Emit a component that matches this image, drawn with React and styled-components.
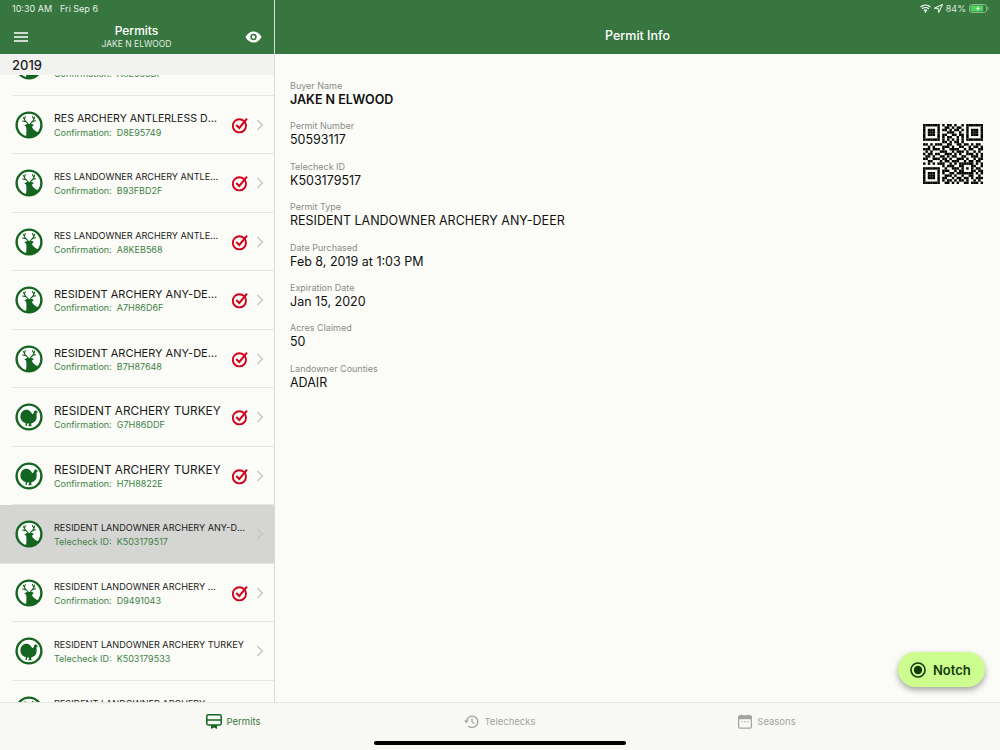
import React from 'react';
import styled, { createGlobalStyle } from 'styled-components';

const GREEN = '#38763f';
const DARK = '#14651f';

const Global = createGlobalStyle`
  html, body { margin: 0; padding: 0; height: 100%; background: #fbfcf7; }
  body { font-family: Inter, "Liberation Sans", sans-serif; }
  * { box-sizing: border-box; }
`;

const Screen = styled.div`
  position: relative;
  width: 1000px;
  height: 750px;
  overflow: hidden;
  display: flex;
  flex-direction: column;
  background: #fbfcf7;
`;

const Main = styled.div`
  flex: 1;
  min-height: 0;
  display: flex;
`;

const Sidebar = styled.aside`
  width: 275px;
  flex: none;
  display: flex;
  flex-direction: column;
  border-right: 1px solid #dcdcd8;
`;

const Detail = styled.section`
  flex: 1;
  display: flex;
  flex-direction: column;
`;

const Header = styled.header`
  height: 54px;
  flex: none;
  background: ${GREEN};
  color: #fff;
  position: relative;
  display: flex;
  align-items: flex-end;
`;

const StatusLeft = styled.div`
  position: absolute;
  left: 12px;
  top: 3px;
  font-size: 9px;
  line-height: 12px;
  color: #e6efe6;
  display: flex;
  gap: 8px;
`;

const StatusRight = styled.div`
  position: absolute;
  right: 11px;
  top: 3px;
  font-size: 9px;
  line-height 12px;
  color: #dfeadf;
  display: flex;
  align-items: center;
  gap: 3px;
`;

const SideBarHead = styled.div`
  width: 100%;
  height: 34px;
  padding: 0 12px 0 14px;
  display: flex;
  align-items: center;
  justify-content: space-between;
`;

const HeadTitles = styled.div`
  text-align: center;
  line-height: 1;
`;

const HeadTitle = styled.div`
  font-size: 12px;
  font-weight: 500;
  line-height: 14px;
`;

const HeadSub = styled.div`
  font-size: 8.5px;
  line-height: 12px;
  color: #e3ece3;
`;

const DetailTitle = styled.div`
  width: 100%;
  height: 36px;
  text-align: center;
  font-size: 12.5px;
  font-weight: 500;
  line-height: 36px;
`;

const ListArea = styled.div`
  position: relative;
  flex: 1;
  min-height: 0;
  overflow: hidden;
`;

const YearBar = styled.div`
  position: absolute;
  z-index: 1;
  top: 0;
  left: 0;
  right: 0;
  height: 21px;
  padding-left: 12px;
  background: #f2f2f0;
  font-size: 13px;
  font-weight: 500;
  line-height: 22px;
  color: #1c1c1c;
`;

const Rows = styled.div`
  margin-top: -17px;
`;

const Row = styled.div`
  height: 58.5px;
  display: flex;
  align-items: center;
  padding: 0 10px 0 15px;
  position: relative;
  background: ${p => (p.$selected ? '#d5d5d3' : 'transparent')};
  &::after {
    content: '';
    position: absolute;
    left: ${p => (p.$selected ? '0' : '12px')};
    right: 0;
    bottom: 0;
    height: 1px;
    background: #e6e6e2;
  }
`;

const RowText = styled.div`
  flex: 1;
  min-width: 0;
  margin-left: 11px;
  padding-top: 1px;
`;

const RowTitle = styled.div`
  font-size: ${p => p.$size}px;
  line-height: 14px;
  color: #1a1a1a;
  white-space: nowrap;
  overflow: hidden;
  text-overflow: ellipsis;
  max-width: ${p => (p.$wide ? '196px' : '167px')};
`;

const RowSub = styled.div`
  font-size: 9px;
  line-height: 12px;
  margin-top: 1px;
  color: #3d8147;
  white-space: pre;
`;

const Field = styled.div`
  margin-bottom: 13.4px;
`;

const FieldLabel = styled.div`
  font-size: 9px;
  line-height: 12px;
  color: #8b8b88;
`;

const FieldValue = styled.div`
  font-size: 12.5px;
  line-height: 15px;
  color: #111;
  font-weight: ${p => (p.$bold ? 600 : 400)};
`;

const DetailBody = styled.div`
  flex: 1;
  padding: 26px 17px 0 15px;
  display: flex;
  justify-content: space-between;
  align-items: flex-start;
`;

const QrBox = styled.div`
  margin-top: 44px;
  line-height: 0;
`;

const TabBar = styled.nav`
  height: 48px;
  flex: none;
  border-top: 1px solid #e6e7e1;
  background: #f8f9f4;
  display: grid;
  grid-template-columns: repeat(3, 267px);
  justify-content: center;
`;

const Tab = styled.div`
  height: 36px;
  display: flex;
  align-items: center;
  justify-content: center;
  gap: 5px;
  font-size: 9.5px;
  color: ${p => (p.$active ? '#38763f' : '#a3a3a1')};
`;

const HomeBar = styled.div`
  position: absolute;
  left: 374px;
  bottom: 5px;
  width: 252px;
  height: 4px;
  border-radius: 2px;
  background: #000;
`;

const Fab = styled.div`
  position: absolute;
  left: 898px;
  top: 652px;
  width: 87px;
  height: 35px;
  border-radius: 18px;
  background: #cdfd8f;
  box-shadow: 0 3px 6px rgba(0, 0, 0, 0.35);
  display: flex;
  align-items: center;
  padding-left: 12px;
  gap: 7px;
  font-size: 13px;
  font-weight: 600;
  color: #123b0d;
`;

function Seal({ kind }) {
  return (
    <svg width="28" height="28" viewBox="0 0 28 28" style={{ flex: 'none' }}>
      <circle cx="14" cy="14" r="12.4" fill="#fff" stroke={DARK} strokeWidth="2.4" />
      {kind === 'deer' ? (
        <g fill={DARK}>
          <path d="M11 26 C11.5 21 11.7 18 11 15.5 L9.2 14.6 L11 13.4 C11.8 12.7 12.6 12.7 13.2 12.9 L15.2 12.7 C16.5 12.6 17.5 13 18.2 13.6 L18.5 15 L16.8 15.4 C17.5 18 19.5 19.5 23.5 21.5 C22 24.5 18.5 26.5 14 26.5 Z" />
          <path d="M13 12.6 C11.5 11.4 9.5 10 8.4 6.4 M10.6 10.8 L7.6 10 M9.4 8.6 L10.2 5.6 M15.6 12.4 C17.4 11.2 19.2 9.4 19.6 6 M17.6 10.4 L20.6 9.8 M18.8 8.2 L17.4 5.4" fill="none" stroke={DARK} strokeWidth="1.1" strokeLinecap="round" />
        </g>
      ) : (
        <g fill={DARK}>
          <path d="M5.4 13.2 C5.6 8.8 9 6 12.4 6.8 C15 7.4 16.2 9.4 17.2 11 C18 11.4 18.8 10.4 19 9 C19.2 7.6 20.6 7 21.6 7.8 L23 9.4 L21.6 9.8 C21.4 11.6 21.8 13.2 21.6 15 C21.2 18.2 18.6 20 16.2 20.4 L16.2 22.4 L18 23.2 L13.2 23.2 L14.4 20.6 C13.6 20.6 13.2 20.6 12.4 20.4 L11.6 23 L10.4 23 L10.8 20 C7.6 19.2 5.2 16.6 5.4 13.2 Z" />
        </g>
      )}
    </svg>
  );
}

function Check() {
  return (
    <svg width="18" height="18" viewBox="0 0 18 18" style={{ flex: 'none' }}>
      <circle cx="8.4" cy="9.8" r="6.6" fill="none" stroke="#d0021b" strokeWidth="1.9" />
      <path d="M5.2 9 L8.3 12 L16 2.6" fill="none" stroke="#d0021b" strokeWidth="2" />
    </svg>
  );
}

function Chevron() {
  return (
    <svg width="8" height="12" viewBox="0 0 8 12" style={{ flex: 'none', marginLeft: 7 }}>
      <path d="M1.4 1 L6.4 6 L1.4 11" fill="none" stroke="#c4c4c2" strokeWidth="1.3" />
    </svg>
  );
}

const QR_ROWS = [
  '1111111010110100101111111',
  '1000001001101011001000001',
  '1011101011010110101011101',
  '1011101000111001001011101',
  '1011101011001101101011101',
  '1000001010110010101000001',
  '1111111010101010101111111',
  '0000000011010110100000000',
  '1101011100110011011010110',
  '0010100011101001100101101',
  '1110111010011110010110011',
  '0101000111001011101001010',
  '1011011001110101001110101',
  '0110100110101100110011101',
  '1100111011010011101001011',
  '0011000101101110010110110',
  '1010101110010101111110101',
  '0000000010111001100011001',
  '1111111001001110101010110',
  '1000001011100101100011011',
  '1011101010011011111110101',
  '1011101001110100100110010',
  '1011101011001011011010111',
  '1000001010110101101001010',
  '1111111001101010011011101',
];

function Qr() {
  const cells = [];
  QR_ROWS.forEach((row, y) => {
    [...row].forEach((c, x) => {
      if (c === '1') cells.push(<rect key={x + '-' + y} x={x} y={y} width="1.02" height="1.02" />);
    });
  });
  return (
    <svg width="60" height="60" viewBox="0 0 25 25" fill="#000">
      {cells}
    </svg>
  );
}

const rows = [
  { kind: 'deer', title: 'RES ARCHERY ANTLERLESS DEER', size: 10.6, sub: 'Confirmation:  A8E953BF', check: true },
  { kind: 'deer', title: 'RES ARCHERY ANTLERLESS DEER', size: 10.6, sub: 'Confirmation:  D8E95749', check: true },
  { kind: 'deer', title: 'RES LANDOWNER ARCHERY ANTLERLESS DEER', size: 9.1, sub: 'Confirmation:  B93FBD2F', check: true },
  { kind: 'deer', title: 'RES LANDOWNER ARCHERY ANTLERLESS DEER', size: 9.1, sub: 'Confirmation:  A8KEB568', check: true },
  { kind: 'deer', title: 'RESIDENT ARCHERY ANY-DEER', size: 11, sub: 'Confirmation:  A7H86D6F', check: true },
  { kind: 'deer', title: 'RESIDENT ARCHERY ANY-DEER', size: 11, sub: 'Confirmation:  B7H87648', check: true },
  { kind: 'turkey', title: 'RESIDENT ARCHERY TURKEY', size: 11.8, sub: 'Confirmation:  G7H86DDF', check: true },
  { kind: 'turkey', title: 'RESIDENT ARCHERY TURKEY', size: 11.8, sub: 'Confirmation:  H7H8822E', check: true },
  { kind: 'deer', title: 'RESIDENT LANDOWNER ARCHERY ANY-DEER', size: 9.1, sub: 'Telecheck ID:  K503179517', selected: true },
  { kind: 'deer', title: 'RESIDENT LANDOWNER ARCHERY ANY-DEER', size: 9.1, sub: 'Confirmation:  D9491043', check: true },
  { kind: 'turkey', title: 'RESIDENT LANDOWNER ARCHERY TURKEY', size: 9.1, sub: 'Telecheck ID:  K503179533' },
  { kind: 'deer', title: 'RESIDENT LANDOWNER ARCHERY ANY-DEER', size: 9.1, sub: 'Confirmation:  D9491044', check: true },
];

const fields = [
  ['Buyer Name', 'JAKE N ELWOOD', true],
  ['Permit Number', '50593117'],
  ['Telecheck ID', 'K503179517'],
  ['Permit Type', 'RESIDENT LANDOWNER ARCHERY ANY-DEER'],
  ['Date Purchased', 'Feb 8, 2019 at 1:03 PM'],
  ['Expiration Date', 'Jan 15, 2020'],
  ['Acres Claimed', '50'],
  ['Landowner Counties', 'ADAIR'],
];

export default function App() {
  return (
    <Screen>
      <Global />
      <Main>
        <Sidebar>
          <Header>
            <StatusLeft>
              <span>10:30 AM</span>
              <span>Fri Sep 6</span>
            </StatusLeft>
            <SideBarHead>
              <svg width="14" height="10" viewBox="0 0 14 10">
                <path d="M0 1 H14 M0 5 H14 M0 9 H14" stroke="#fff" strokeWidth="1.3" />
              </svg>
              <HeadTitles>
                <HeadTitle>Permits</HeadTitle>
                <HeadSub>JAKE N ELWOOD</HeadSub>
              </HeadTitles>
              <svg width="17" height="12" viewBox="0 0 17 12">
                <path d="M0.4 6 C3 1.8 5.6 0.4 8.5 0.4 C11.4 0.4 14 1.8 16.6 6 C14 10.2 11.4 11.6 8.5 11.6 C5.6 11.6 3 10.2 0.4 6 Z" fill="#fff" />
                <circle cx="8.5" cy="6" r="3.2" fill={GREEN} />
                <circle cx="8.5" cy="6" r="1.7" fill="#fff" />
              </svg>
            </SideBarHead>
          </Header>
          <ListArea>
            <YearBar>2019</YearBar>
            <Rows>
              {rows.map((r, i) => (
                <Row key={i} $selected={r.selected}>
                  <Seal kind={r.kind} />
                  <RowText>
                    <RowTitle $size={r.size} $wide={!r.check}>{r.title}</RowTitle>
                    <RowSub>{r.sub}</RowSub>
                  </RowText>
                  {r.check && <Check />}
                  <Chevron />
                </Row>
              ))}
            </Rows>
          </ListArea>
        </Sidebar>
        <Detail>
          <Header>
            <StatusRight>
              <svg width="11" height="9" viewBox="0 0 11 9">
                <path d="M0.6 3 C3.5 0.4 7.5 0.4 10.4 3 M2.2 4.8 C4 3.2 7 3.2 8.8 4.8 M3.9 6.5 C4.8 5.8 6.2 5.8 7.1 6.5" fill="none" stroke="#fff" strokeWidth="1.2" />
                <circle cx="5.5" cy="7.8" r="0.9" fill="#fff" />
              </svg>
              <svg width="9" height="9" viewBox="0 0 9 9">
                <path d="M8.4 0.6 L0.6 4.2 L4.2 4.8 L4.8 8.4 Z" fill="none" stroke="#dfeadf" strokeWidth="1.1" />
              </svg>
              <span>84%</span>
              <svg width="20" height="9" viewBox="0 0 20 9">
                <rect x="0.5" y="0.5" width="17" height="8" rx="2.4" fill="none" stroke="#8fb592" />
                <rect x="1.6" y="1.6" width="12.6" height="5.8" rx="1.2" fill="#50d35c" />
                <path d="M10 1.4 L7 5 H9 L8 7.6 L11 4 H9 Z" fill="#fff" />
                <rect x="18.4" y="3" width="1" height="3" fill="#8fb592" />
              </svg>
            </StatusRight>
            <DetailTitle>Permit Info</DetailTitle>
          </Header>
          <DetailBody>
            <div>
              {fields.map(([label, value, bold]) => (
                <Field key={label}>
                  <FieldLabel>{label}</FieldLabel>
                  <FieldValue $bold={bold}>{value}</FieldValue>
                </Field>
              ))}
            </div>
            <QrBox>
              <Qr />
            </QrBox>
          </DetailBody>
        </Detail>
      </Main>
      <TabBar>
        <Tab $active>
          <svg width="16" height="15" viewBox="0 0 16 15">
            <rect x="0.8" y="0.8" width="14.4" height="10.2" rx="1.4" fill="none" stroke={DARK} strokeWidth="1.5" />
            <path d="M1 6 H15" stroke={DARK} strokeWidth="1.5" />
            <path d="M5 11 H11 V15 L8 13.6 L5 15 Z" fill={DARK} />
          </svg>
          <span>Permits</span>
        </Tab>
        <Tab>
          <svg width="15" height="15" viewBox="0 0 15 15">
            <path d="M2.4 7.5 A5.7 5.7 0 1 1 4.2 12" fill="none" stroke="#a3a3a1" strokeWidth="1.3" />
            <path d="M0 6.6 L2.4 9.2 L4.8 6.6 Z" fill="#a3a3a1" />
            <path d="M8 4.2 V8 L10.4 9.4" fill="none" stroke="#a3a3a1" strokeWidth="1.2" />
          </svg>
          <span>Telechecks</span>
        </Tab>
        <Tab>
          <svg width="14" height="15" viewBox="0 0 14 15">
            <rect x="0.6" y="1.8" width="12.8" height="12.4" rx="1.2" fill="none" stroke="#a3a3a1" strokeWidth="1.2" />
            <rect x="0.6" y="1.8" width="12.8" height="3.4" fill="#a3a3a1" />
            <path d="M3.4 0.4 V2.4 M10.6 0.4 V2.4" stroke="#a3a3a1" strokeWidth="1.2" />
            <path d="M3.4 7.6 H4.6 M6.4 7.6 H7.6 M9.4 7.6 H10.6" stroke="#a3a3a1" strokeWidth="1.1" />
          </svg>
          <span>Seasons</span>
        </Tab>
      </TabBar>
      <Fab>
        <svg width="16" height="16" viewBox="0 0 16 16">
          <circle cx="8" cy="8" r="7" fill="none" stroke="#123b0d" strokeWidth="1.6" />
          <circle cx="8" cy="8" r="4.2" fill="#123b0d" />
        </svg>
        <span>Notch</span>
      </Fab>
      <HomeBar />
    </Screen>
  );
}
